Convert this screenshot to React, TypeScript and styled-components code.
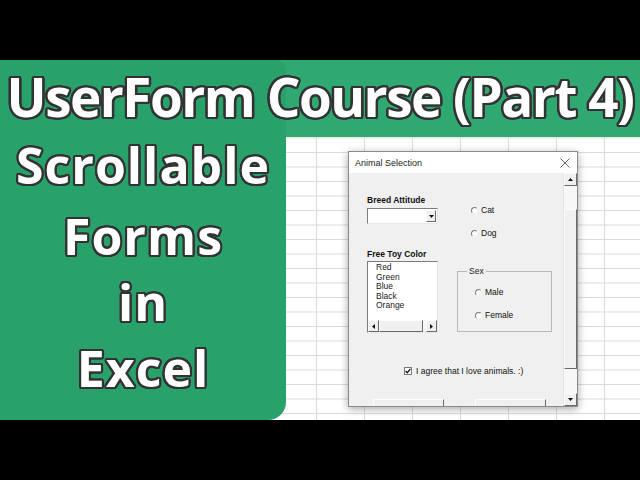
import React from 'react'
import styled, { createGlobalStyle } from 'styled-components'

// white lettering with a dark outline, built from ring of shadows
const outline = (r: number, color: string) =>
  Array.from({ length: 16 }, (_, i) => {
    const a = (i * Math.PI) / 8
    return `${(r * Math.cos(a)).toFixed(2)}px ${(r * Math.sin(a)).toFixed(2)}px 0 ${color}`
  }).join(', ')

const GlobalStyle = createGlobalStyle`
  html, body { margin: 0; padding: 0; background: #000; }
`

type Dir = 'up' | 'down' | 'left' | 'right'

const Arrow = ({ dir }: { dir: Dir }) => {
  const vertical = dir === 'up' || dir === 'down'
  const pts = {
    up: '0,3 2.5,0 5,3',
    down: '0,0 2.5,3 5,0',
    left: '3,0 0,2.5 3,5',
    right: '0,0 3,2.5 0,5',
  }[dir]
  return (
    <svg width={vertical ? 5 : 3} height={vertical ? 3 : 5} viewBox={vertical ? '0 0 5 3' : '0 0 3 5'}>
      <polygon points={pts} fill="#111" />
    </svg>
  )
}

export default function App() {
  return (
    <Page>
      <GlobalStyle />
      <Letterbox />
      <Stage>
        <Banner />
        <Sheet>
          <Dialog>
            <TitleBar>
              <span>Animal Selection</span>
              <svg width="10" height="10" viewBox="0 0 10 10">
                <path d="M0.5 0.5 L9.5 9.5 M9.5 0.5 L0.5 9.5" stroke="#555" strokeWidth="0.9" />
              </svg>
            </TitleBar>
            <Body>
              <FormArea>
                <Row>
                  <Column>
                    <FieldLabel>Breed Attitude</FieldLabel>
                    <Combo>
                      <ComboText />
                      <DropButton>
                        <Arrow dir="down" />
                      </DropButton>
                    </Combo>
                  </Column>
                  <RadioGroup>
                    <Radio>
                      <RadioDot />
                      Cat
                    </Radio>
                    <Radio>
                      <RadioDot />
                      Dog
                    </Radio>
                  </RadioGroup>
                </Row>
                <Row $top={11}>
                  <Column>
                    <FieldLabel>Free Toy Color</FieldLabel>
                    <ListBox>
                      <ListItems>
                        {['Red', 'Green', 'Blue', 'Black', 'Orange'].map(c => (
                          <ListItem key={c}>{c}</ListItem>
                        ))}
                      </ListItems>
                      <HScroll>
                        <ScrollButton $w={11}>
                          <Arrow dir="left" />
                        </ScrollButton>
                        <HThumb />
                        <HTrack />
                        <ScrollButton $w={11}>
                          <Arrow dir="right" />
                        </ScrollButton>
                      </HScroll>
                    </ListBox>
                  </Column>
                  <Frame>
                    <FrameLegend>Sex</FrameLegend>
                    <FrameRadios>
                      <Radio>
                        <RadioDot />
                        Male
                      </Radio>
                      <Radio>
                        <RadioDot />
                        Female
                      </Radio>
                    </FrameRadios>
                  </Frame>
                </Row>
                <CheckRow>
                  <CheckBox>
                    <svg width="6" height="6" viewBox="0 0 6 6">
                      <path d="M0.6 3 L2.3 4.8 L5.4 0.8" stroke="#111" strokeWidth="1.3" fill="none" />
                    </svg>
                  </CheckBox>
                  I agree that I love animals. :)
                </CheckRow>
                <ButtonRow>
                  <FormButton />
                  <FormButton />
                </ButtonRow>
              </FormArea>
              <VScroll>
                <ScrollButton $w={13}>
                  <Arrow dir="up" />
                </ScrollButton>
                <VTrack $h={23} />
                <VThumb />
                <VTrack />
                <ScrollButton $w={13}>
                  <Arrow dir="down" />
                </ScrollButton>
              </VScroll>
            </Body>
          </Dialog>
        </Sheet>
        <SidePanel>
          <SideLine $gap={5}>Scrollable</SideLine>
          <SideLine>Forms</SideLine>
          <SideLine>in</SideLine>
          <SideLine>Excel</SideLine>
        </SidePanel>
        <Title>UserForm Course (Part 4)</Title>
      </Stage>
      <Letterbox />
    </Page>
  )
}

const Page = styled.div`
  width: 640px;
  height: 480px;
  background: #000;
  display: flex;
  flex-direction: column;
  overflow: hidden;
`

const Letterbox = styled.div`
  height: 60px;
  flex: none;
`

const Stage = styled.div`
  height: 360px;
  display: grid;
  grid-template-columns: 286px 1fr;
  grid-template-rows: 77px 1fr;
`

const Banner = styled.div`
  grid-column: 1 / 3;
  grid-row: 1;
  background: #30a872;
`

const Sheet = styled.div`
  grid-column: 1 / 3;
  grid-row: 2;
  background-color: #fff;
  background-image: linear-gradient(to right, #dadada 1px, transparent 1px),
    linear-gradient(to bottom, #dadada 1px, transparent 1px);
  background-size: 48px 14.5px;
  background-position: 28px 0.5px;
  padding: 14px 0 0 348px;
`

const SidePanel = styled.div`
  grid-column: 1;
  grid-row: 1 / 3;
  background: #29a16a;
  border-radius: 0 10px 18px 0;
  display: flex;
  flex-direction: column;
  align-items: center;
  padding-top: 72px;
`

const SideLine = styled.div<{ $gap?: number }>`
  font-family: 'Open Sans', 'Liberation Sans', sans-serif;
  font-weight: 700;
  font-size: 50px;
  letter-spacing: 1px;
  line-height: 66px;
  color: #fff;
  margin-bottom: ${p => p.$gap ?? 0}px;
  text-shadow: ${outline(2.2, '#333')};
`

const Title = styled.div`
  grid-column: 1 / 3;
  grid-row: 1;
  font-family: 'Open Sans', 'Liberation Sans', sans-serif;
  font-weight: 700;
  font-size: 53px;
  letter-spacing: -1.5px;
  line-height: 74px;
  color: #fff;
  text-align: center;
  white-space: nowrap;
  text-shadow: ${outline(2.4, '#333')};
`

const Dialog = styled.div`
  width: 230px;
  height: 256px;
  box-sizing: border-box;
  border: 1px solid #8a8a8a;
  background: #f0f0f0;
  box-shadow: 0 2px 8px rgba(0, 0, 0, 0.35);
  display: flex;
  flex-direction: column;
  font-family: 'Liberation Sans', Arial, sans-serif;
  color: #111;
  overflow: hidden;
`

const TitleBar = styled.div`
  height: 21px;
  flex: none;
  background: #fff;
  display: flex;
  align-items: center;
  justify-content: space-between;
  padding: 0 7px 0 6px;
  font-size: 9px;
  color: #222;
`

const Body = styled.div`
  flex: 1;
  display: flex;
  min-height: 0;
`

const FormArea = styled.div`
  flex: 1;
  overflow: hidden;
  padding: 22px 0 0 18px;
  font-size: 8.5px;
`

const Row = styled.div<{ $top?: number }>`
  display: flex;
  align-items: flex-start;
  margin-top: ${p => p.$top ?? 0}px;
`

const Column = styled.div`
  width: 71px;
  display: flex;
  flex-direction: column;
`

const FieldLabel = styled.div`
  font-weight: 700;
  line-height: 10px;
  white-space: nowrap;
  margin-bottom: 3px;
`

const sunken = `
  border: 1px solid;
  border-color: #7d7d7d #e8e8e8 #e8e8e8 #7d7d7d;
  background: #fff;
  box-sizing: border-box;
`

const raised = `
  border: 1px solid;
  border-color: #fdfdfd #6a6a6a #6a6a6a #fdfdfd;
  background: #f0f0f0;
  box-sizing: border-box;
`

const Combo = styled.div`
  ${sunken}
  height: 16px;
  display: flex;
  padding: 1px;
`

const ComboText = styled.div`
  flex: 1;
`

const DropButton = styled.div`
  ${raised}
  width: 10px;
  display: flex;
  align-items: center;
  justify-content: center;
`

const RadioGroup = styled.div`
  margin: 10px 0 0 33px;
  display: flex;
  flex-direction: column;
  gap: 13px;
`

const Radio = styled.div`
  display: flex;
  align-items: center;
  line-height: 10px;
  gap: 3px;
`

const RadioDot = styled.span`
  width: 7px;
  height: 7px;
  box-sizing: border-box;
  border-radius: 50%;
  border: 1px solid;
  border-color: #7a7a7a #f4f4f4 #f4f4f4 #7a7a7a;
  background: #fdfdfd;
`

const ListBox = styled.div`
  ${sunken}
  height: 72px;
  display: flex;
  flex-direction: column;
  margin-top: -1px;
`

const ListItems = styled.div`
  flex: 1;
  padding: 1px 0 0 8px;
`

const ListItem = styled.div`
  line-height: 9.5px;
  color: #222;
`

const HScroll = styled.div`
  height: 12px;
  display: flex;
  background: #f7f7f7;
`

const ScrollButton = styled.div<{ $w: number }>`
  ${raised}
  width: ${p => p.$w}px;
  height: ${p => (p.$w === 13 ? 13 : 12)}px;
  flex: none;
  display: flex;
  align-items: center;
  justify-content: center;
`

const HThumb = styled.div`
  ${raised}
  width: 44px;
`

const HTrack = styled.div`
  flex: 1;
`

const Frame = styled.fieldset`
  margin: 17px 0 0 19px;
  padding: 0 0 0 17px;
  width: 95px;
  height: 66px;
  box-sizing: border-box;
  border: 1px solid #b9b9b9;
  min-width: 0;
`

const FrameLegend = styled.legend`
  margin-left: -8px;
  padding: 0 2px;
  line-height: 10px;
  color: #222;
`

const FrameRadios = styled.div`
  margin-top: 11px;
  display: flex;
  flex-direction: column;
  gap: 13px;
`

const CheckRow = styled.div`
  margin: 33px 0 0 37px;
  display: flex;
  align-items: center;
  gap: 4px;
  line-height: 10px;
`

const CheckBox = styled.span`
  width: 8px;
  height: 8px;
  box-sizing: border-box;
  border: 1px solid #7a7a7a;
  background: #fff;
  display: flex;
  align-items: center;
  justify-content: center;
`

const ButtonRow = styled.div`
  margin: 23px 0 0 6px;
  display: flex;
  gap: 31px;
`

const FormButton = styled.div`
  ${raised}
  width: 71px;
  height: 24px;
`

const VScroll = styled.div`
  width: 13px;
  flex: none;
  display: flex;
  flex-direction: column;
  background: #f7f7f7;
  border-left: 1px solid #e2e2e2;
`

const VTrack = styled.div<{ $h?: number }>`
  ${p => (p.$h ? `height: ${p.$h}px;` : 'flex: 1;')}
`

const VThumb = styled.div`
  ${raised}
  height: 160px;
`
